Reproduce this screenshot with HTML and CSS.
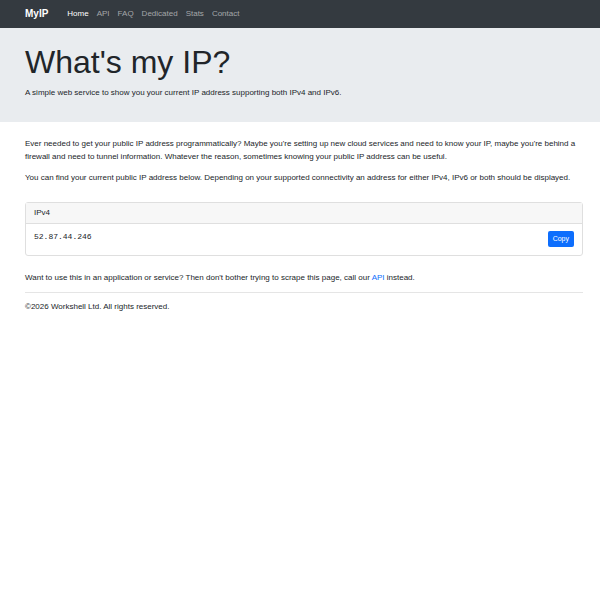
FILE: index.html
```html
<!DOCTYPE html>
<html lang="en">
<head>
    <meta charset="UTF-8">
    <meta name="viewport" content="width=device-width, initial-scale=1.0">
    <title>MyIP</title>
    <link rel="stylesheet" href="styles.css">
</head>
<body>
    <header class="navbar">
        <a class="brand" href="#">MyIP</a>
        <nav>
            <ul>
                <li><a class="active" href="#">Home</a></li>
                <li><a href="#">API</a></li>
                <li><a href="#">FAQ</a></li>
                <li><a href="#">Dedicated</a></li>
                <li><a href="#">Stats</a></li>
                <li><a href="#">Contact</a></li>
            </ul>
        </nav>
    </header>

    <div class="jumbotron">
        <div class="container">
            <h1>What's my IP?</h1>
            <p>A simple web service to show you your current IP address supporting both IPv4 and IPv6.</p>
        </div>
    </div>

    <div class="container main">
        <p>Ever needed to get your public IP address programmatically? Maybe you're setting up new cloud services and need to know your IP, maybe you're behind a firewall and need to tunnel information. Whatever the reason, sometimes knowing your public IP address can be useful.</p>
        <p>You can find your current public IP address below. Depending on your supported connectivity an address for either IPv4, IPv6 or both should be displayed.</p>

        <!-- IPv4 card -->
        <div class="card">
            <div class="card-header">IPv4</div>
            <div class="card-body">
                <code>52.87.44.246</code>
                <button class="copy-btn">Copy</button>
            </div>
        </div>

        <p class="api-note">Want to use this in an application or service? Then don't bother trying to scrape this page, call our <a href="#">API</a> instead.</p>

        <footer>
            <p>&copy;2026 Workshell Ltd. All rights reserved.</p>
        </footer>
    </div>
</body>
</html>
```

FILE: styles.css
```css
body {
    font-family: 'Liberation Sans', Arial, sans-serif;
    font-size: 8px;
    line-height: 1.6;
    margin: 0;
    padding: 0;
    color: #212529;
    background-color: #fff;
}

a {
    text-decoration: none;
}

.navbar {
    display: flex;
    align-items: center;
    height: 28px;
    padding: 0 25px;
    background-color: #343a40;
}

.brand {
    color: #fff;
    font-weight: bold;
    font-size: 10px;
    margin-right: 19px;
}

.navbar ul {
    display: flex;
    gap: 8px;
    list-style: none;
    margin: 0;
    padding: 0;
}

.navbar li a {
    color: rgba(255, 255, 255, 0.55);
    font-size: 8px;
}

.container {
    padding: 0 17px 0 25px;
}

.jumbotron {
    background-color: #e9ecef;
    height: 94px;
    overflow: hidden;
}

.jumbotron h1 {
    font-size: 32px;
    font-weight: 300;
    line-height: 1.2;
    margin: 15px 0 6px;
}

.jumbotron p {
    margin: 0;
    font-size: 8px;
}

.main {
    padding-top: 15px;
}

.main p {
    margin: 0 0 8px;
    font-size: 8px;
    line-height: 13px;
}

.card {
    margin: 18px 0 15px;
    border: 1px solid #dfdfdf;
    border-radius: 3px;
}

.card-header {
    padding: 4px 8px;
    background-color: #f7f7f7;
    border-bottom: 1px solid #dfdfdf;
    line-height: 12px;
}

.card-body {
    display: flex;
    justify-content: space-between;
    align-items: flex-start;
    padding: 7px 8px 8px;
}

.card-body code {
    font-family: 'Liberation Mono', 'Courier New', monospace;
    font-size: 8px;
    color: #212529;
}

.copy-btn {
    font-family: 'Liberation Sans', Arial, sans-serif;
    font-size: 7px;
    line-height: 8px;
    color: #fff;
    background-color: #0d6efd;
    border: none;
    border-radius: 2px;
    padding: 4px 5px;
    cursor: pointer;
}

a[href] {
    color: #0d6efd;
}

.navbar a[href] {
    color: rgba(255, 255, 255, 0.55);
}

.navbar a.brand, .navbar a.active {
    color: #fff;
}

footer {
    border-top: 1px solid #e5e5e5;
    margin-top: 6px;
    padding-top: 7px;
}
```
